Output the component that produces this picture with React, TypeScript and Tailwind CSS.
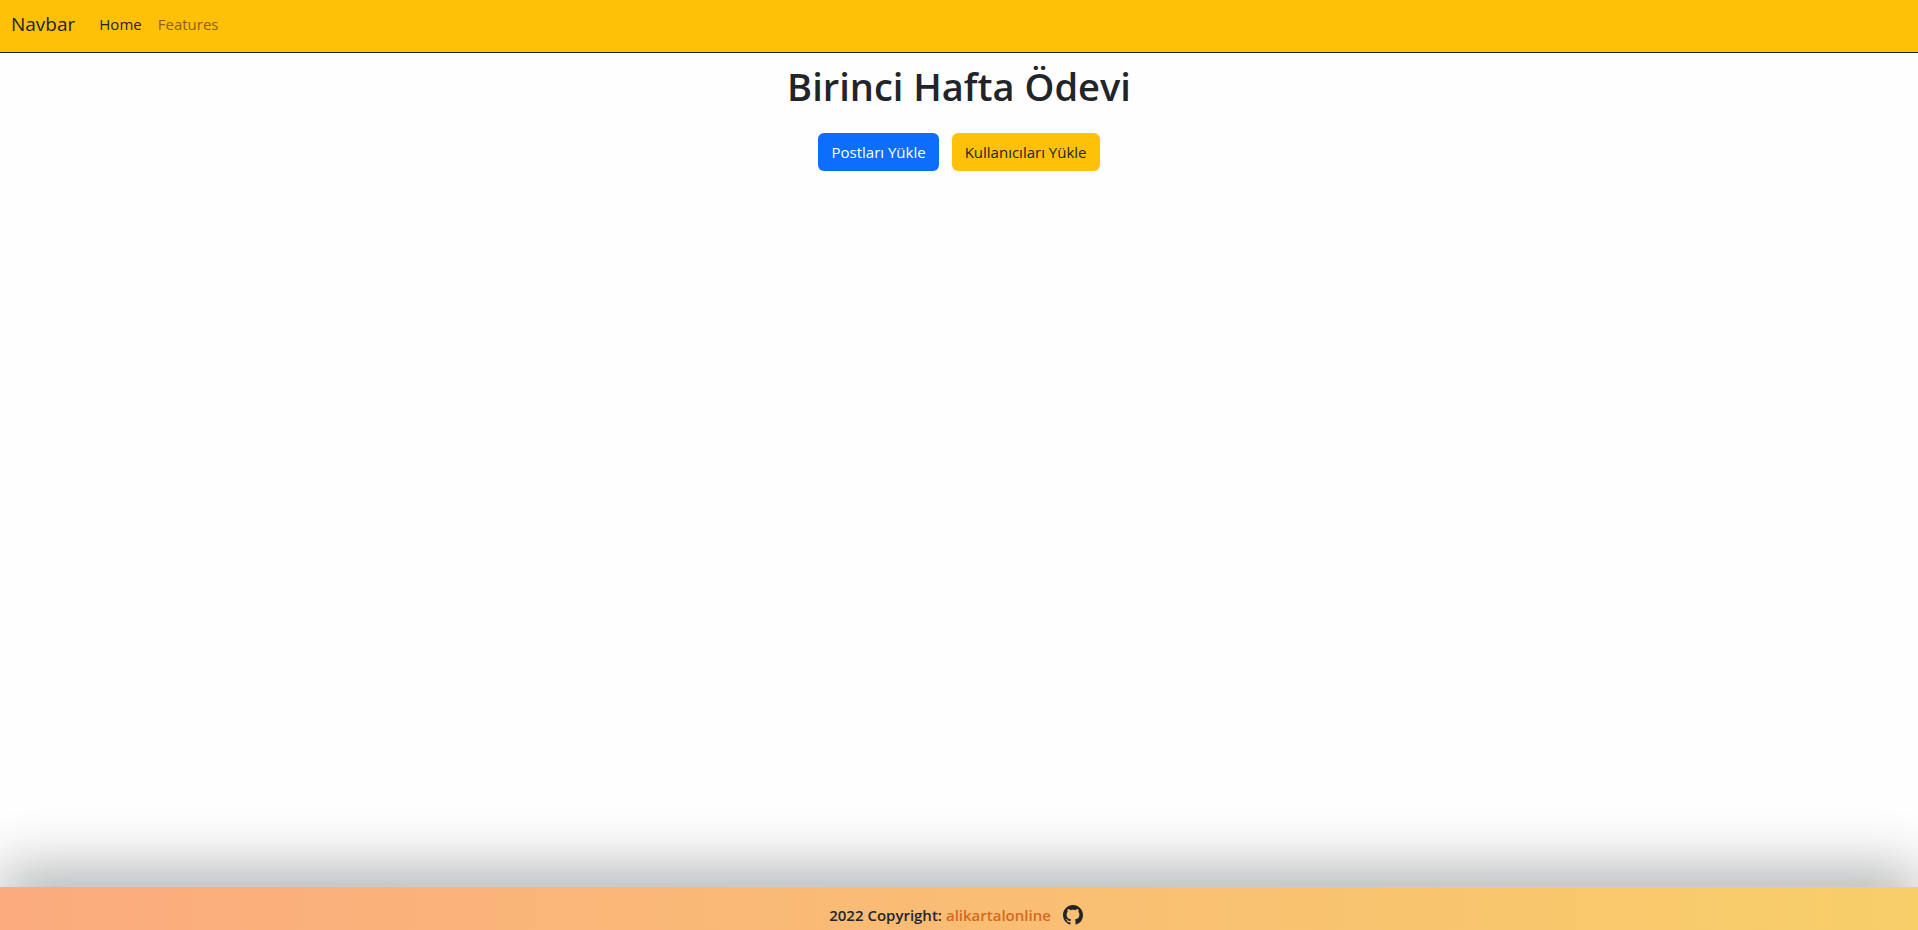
const github =
  "M8 0C3.58 0 0 3.58 0 8c0 3.54 2.29 6.53 5.47 7.59.4.07.55-.17.55-.38 0-.19-.01-.82-.01-1.49-2.01.37-2.53-.49-2.69-.94-.09-.23-.48-.94-.82-1.13-.28-.15-.68-.52-.01-.53.63-.01 1.08.58 1.23.82.72 1.21 1.87.87 2.33.66.07-.52.28-.87.51-1.07-1.78-.2-3.64-.89-3.64-3.95 0-.87.31-1.59.82-2.15-.08-.2-.36-1.02.08-2.12 0 0 .67-.21 2.2.82.64-.18 1.32-.27 2-.27.68 0 1.36.09 2 .27 1.53-1.04 2.2-.82 2.2-.82.44 1.1.16 1.92.08 2.12.51.56.82 1.27.82 2.15 0 3.07-1.87 3.75-3.65 3.95.29.25.54.73.54 1.48 0 1.07-.01 1.93-.01 2.2 0 .21.15.46.55.38A8.012 8.012 0 0 0 16 8c0-4.42-3.58-8-8-8z";

export default function App() {
  return (
    <div className="flex min-h-screen flex-col overflow-hidden bg-[#fefefe] font-['Open_Sans','Noto_Sans',sans-serif] text-[#212529]">
      <nav className="flex h-[53px] items-center gap-6 border-b border-[#212529] bg-[#ffc107] px-[11px] pb-1">
        <a href="#" className="text-[19px] leading-[30px]">
          Navbar
        </a>
        <div className="flex gap-4 text-[15px] leading-6">
          <a href="#home" className="text-[#212529]">
            Home
          </a>
          <a href="#features" className="text-[#935b1d]">
            Features
          </a>
        </div>
      </nav>
      <main className="flex grow flex-col items-center pt-[9px]">
        <h1 className="text-[38px] leading-12 font-semibold">Birinci Hafta Ödevi</h1>
        <div className="mt-[23px] flex gap-[13px] text-[15px] leading-6">
          <button type="button" className="rounded-md bg-[#0d6efd] px-[13px] py-[7px] text-white">
            Postları Yükle
          </button>
          <button type="button" className="rounded-md bg-[#ffc107] px-[13px] py-[7px]">
            Kullanıcıları Yükle
          </button>
        </div>
      </main>
      <footer className="flex items-center justify-center bg-linear-to-r from-[#fbab7e] to-[#f7ce68] pt-4 pr-[6px] pb-[3px] text-[15px] leading-6 font-semibold shadow-[0_-11px_60px_rgba(33,37,41,0.48)]">
        <span>2022 Copyright:</span>
        <a href="#profile" className="ml-1 text-[#d4691e]">
          alikartalonline
        </a>
        <a href="#github" aria-label="GitHub" className="ml-3">
          <svg viewBox="0 0 16 16" className="size-5 fill-[#212529]">
            <path d={github} />
          </svg>
        </a>
      </footer>
    </div>
  );
}
